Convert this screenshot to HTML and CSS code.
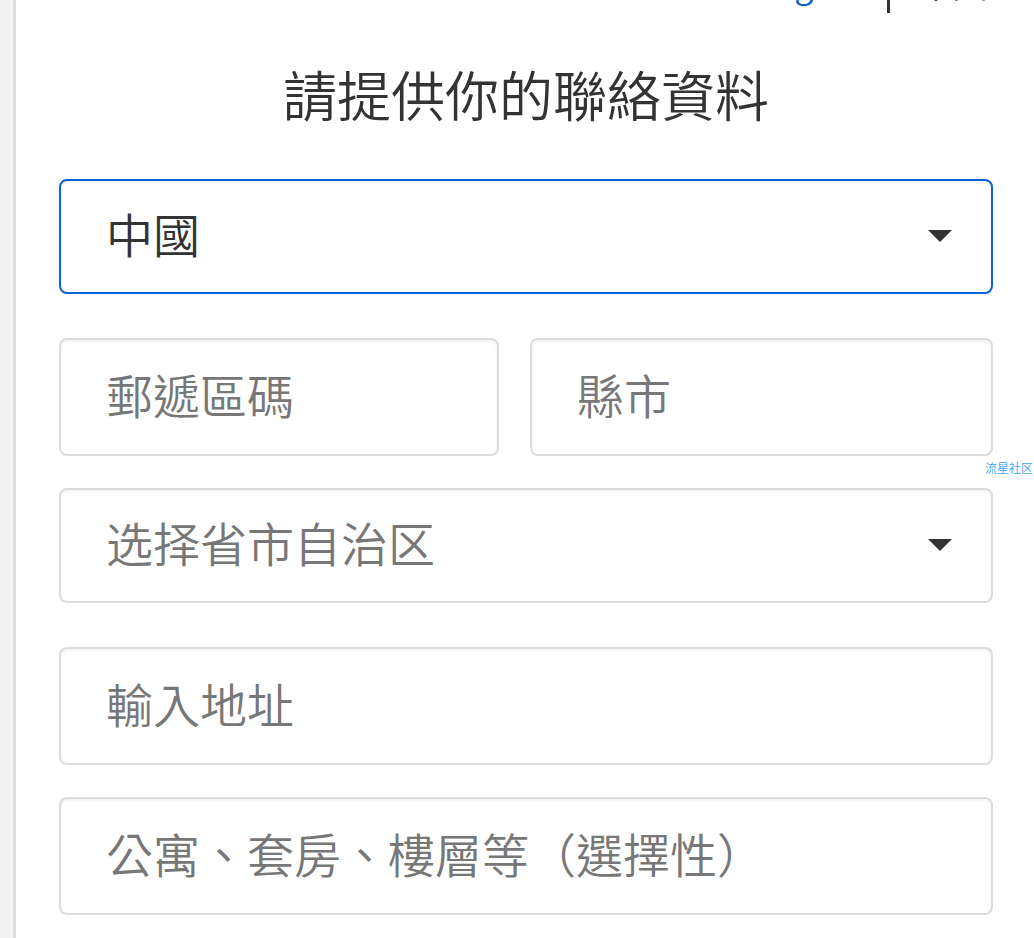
FILE: index.html
```html
<!DOCTYPE html>
<html lang="zh-Hant">
<head>
<meta charset="utf-8">
<title>請提供你的聯絡資料</title>
<link rel="stylesheet" href="styles.css">
</head>
<body>
<div class="page">
  <aside class="rail"></aside>
  <main class="main">
    <div class="topbar">
      <span class="lang-link">English</span>
      <span class="lang-sep"></span>
      <span class="lang-current">中文</span>
    </div>
    <h1 class="title">請提供你的聯絡資料</h1>
    <form class="form">
      <div class="field select focused">
        <span class="value">中國</span>
        <svg class="caret" width="24" height="12" viewBox="0 0 24 12"><path d="M0 0H24L12 12Z" fill="#333"/></svg>
      </div>
      <div class="row">
        <div class="field half-left"><span class="ph">郵遞區碼</span></div>
        <div class="field half-right"><span class="ph">縣市</span></div>
      </div>
      <div class="field select">
        <span class="ph">选择省市自治区</span>
        <svg class="caret" width="24" height="12" viewBox="0 0 24 12"><path d="M0 0H24L12 12Z" fill="#333"/></svg>
      </div>
      <div class="field gap-big"><span class="ph">輸入地址</span></div>
      <div class="field"><span class="ph">公寓、套房、樓層等（選擇性）</span></div>
    </form>
    <span class="watermark">流星社区</span>
  </main>
</div>
</body>
</html>
```
FILE: styles.css
```css
* { box-sizing: border-box; }
html, body { margin: 0; padding: 0; background: #fff; overflow: hidden; }
body {
  font-family: "Noto Sans CJK TC", "Noto Sans", sans-serif;
  font-weight: 350;
  color: #333;
}
.page {
  display: flex;
  min-height: 938px;
}
.rail {
  width: 16px;
  flex: none;
  background: #f4f4f4;
  border-right: 3px solid #dedede;
}
.main {
  position: relative;
  flex: 1;
  padding: 0 41px 0 43px;
}
.topbar {
  margin: -36px 6px 0 0;
  height: 40px;
  line-height: 40px;
  font-size: 34px;
  display: flex;
  justify-content: flex-end;
  align-items: flex-start;
  white-space: nowrap;
}
.lang-link { color: #0a5fcc; margin-right: 19px; }
.lang-sep {
  width: 3px;
  height: 49px;
  background: #333;
  margin-right: 29px;
}
.lang-current { color: #333; }
.title {
  margin: 57px 0 53px;
  font-size: 54px;
  font-weight: 350;
  line-height: 65px;
  text-align: center;
  color: #333;
}
.form {
  display: flex;
  flex-direction: column;
}
.field {
  height: 118px;
  border: 2px solid #dcdcdc;
  border-radius: 8px;
  box-shadow: inset 0 2px 3px rgba(0, 0, 0, 0.05);
  display: flex;
  align-items: center;
  padding: 0 39px 8px 45px;
  font-size: 47px;
  background: #fff;
}
.field.select {
  height: 115px;
  justify-content: space-between;
  margin-bottom: 44px;
}
.field.select .caret { margin-top: 6px; }
.field.focused {
  border-color: #0a64d8;
}
.field.gap-big { margin-bottom: 32px; }
.row {
  display: flex;
  gap: 31px;
  margin-bottom: 32px;
}
.half-left { width: 440px; flex: none; }
.half-right { flex: 1; }
.value { color: #333; }
.ph { color: #777; }
.caret { flex: none; }
.watermark {
  position: absolute;
  left: 969px;
  top: 460px;
  font-size: 12px;
  line-height: 16px;
  color: #3aa2f2;
  white-space: nowrap;
}
```
